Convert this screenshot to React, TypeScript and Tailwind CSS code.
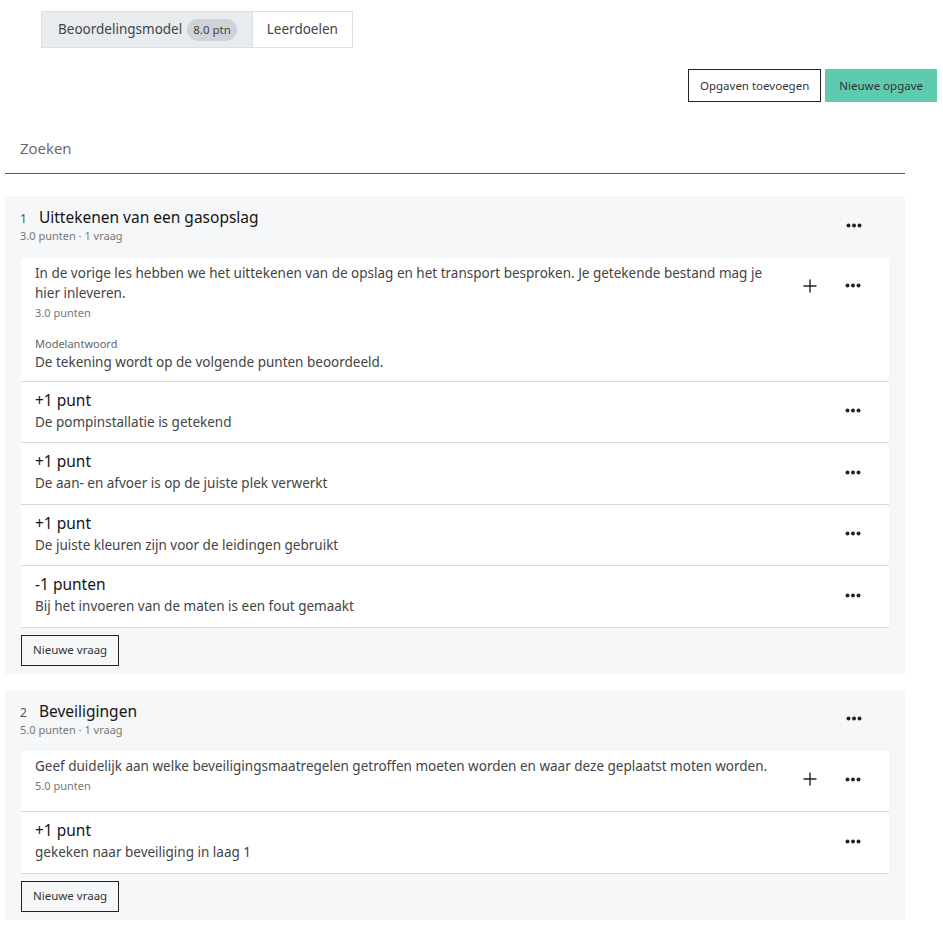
import React from 'react';

interface Criterion {
  label: string;
  text: string;
}

interface Section {
  nr: number;
  title: string;
  meta: string;
  question: string[];
  points: string;
  model?: string;
  criteria: Criterion[];
}

const sections: Section[] = [
  {
    nr: 1,
    title: 'Uittekenen van een gasopslag',
    meta: '3.0 punten · 1 vraag',
    question: [
      'In de vorige les hebben we het uittekenen van de opslag en het transport besproken. Je getekende bestand mag je',
      'hier inleveren.',
    ],
    points: '3.0 punten',
    model: 'De tekening wordt op de volgende punten beoordeeld.',
    criteria: [
      { label: '+1 punt', text: 'De pompinstallatie is getekend' },
      { label: '+1 punt', text: 'De aan- en afvoer is op de juiste plek verwerkt' },
      { label: '+1 punt', text: 'De juiste kleuren zijn voor de leidingen gebruikt' },
      { label: '-1 punten', text: 'Bij het invoeren van de maten is een fout gemaakt' },
    ],
  },
  {
    nr: 2,
    title: 'Beveiligingen',
    meta: '5.0 punten · 1 vraag',
    question: ['Geef duidelijk aan welke beveiligingsmaatregelen getroffen moeten worden en waar deze geplaatst moten worden.'],
    points: '5.0 punten',
    criteria: [{ label: '+1 punt', text: 'gekeken naar beveiliging in laag 1' }],
  },
];

function Dots() {
  return (
    <button className="w-[30px] h-[30px] flex items-center justify-center">
      <svg width="16" height="5" viewBox="0 0 16 5">
        <circle cx="2.5" cy="2.5" r="2" fill="#222" />
        <circle cx="8" cy="2.5" r="2" fill="#222" />
        <circle cx="13.5" cy="2.5" r="2" fill="#222" />
      </svg>
    </button>
  );
}

function PlusIcon() {
  return (
    <button className="w-[30px] h-[30px] flex items-center justify-center">
      <svg width="16" height="16" viewBox="0 0 16 16">
        <path d="M8 1.5v13M1.5 8h13" stroke="#222" strokeWidth="1.4" />
      </svg>
    </button>
  );
}

function SectionCard({ s }: { s: Section }) {
  return (
    <div className="ml-[5px] w-[900px] bg-[#f6f7f9] pb-[8px]">
      {/* header */}
      <div className="h-[61.5px] pl-[15px] pr-[36px] pt-[10px] flex items-start justify-between">
        <div>
          <div className="flex items-baseline gap-[12px] h-[22px] leading-[22px]">
            <span className="text-[12px] text-[#555]">{s.nr}</span>
            <span className="text-[15.5px] text-[#151515]">{s.title}</span>
          </div>
          <div className="text-[11px] leading-[16px] text-[#777]">{s.meta}</div>
        </div>
        <div className="mt-[4px]">
          <Dots />
        </div>
      </div>

      <div className="mx-[16px] bg-white">
        {/* question */}
        <div
          className={`pl-[14px] pr-[21px] pt-[5px] border-b border-[#d8d8dc] ${s.model ? 'pb-[9px]' : 'pb-[15px]'}`}
        >
          <div className="flex items-start justify-between">
            <div>
              {s.question.map((l) => (
                <div key={l} className="text-[13.5px] leading-[20px] text-[#444]">
                  {l}
                </div>
              ))}
              <div className="text-[11px] leading-[20px] text-[#777]">{s.points}</div>
            </div>
            <div className="flex items-center gap-[13px] mt-[8px]">
              <PlusIcon />
              <Dots />
            </div>
          </div>
          {s.model && (
            <div className="mt-[13px]">
              <div className="text-[11px] leading-[16px] text-[#666]">Modelantwoord</div>
              <div className="text-[13.5px] leading-[20px] text-[#444]">{s.model}</div>
            </div>
          )}
        </div>

        {/* criteria */}
        {s.criteria.map((c, i) => (
          <div
            key={i}
            className="pl-[14px] pr-[21px] pt-[7px] h-[61.5px] flex items-start justify-between border-b border-[#d8d8dc]"
          >
            <div>
              <div className="text-[15.5px] leading-[22px] text-[#151515]">{c.label}</div>
              <div className="text-[13.5px] leading-[22px] text-[#444]">{c.text}</div>
            </div>
            <div className="mt-[7px]">
              <Dots />
            </div>
          </div>
        ))}
      </div>

      <div className="mx-[16px] mt-[7px]">
        <button className="h-[31px] px-[11px] border border-[#222] text-[11.5px] text-[#333] bg-transparent">
          Nieuwe vraag
        </button>
      </div>
    </div>
  );
}

export default function App() {
  return (
    <div className="min-h-[939px] bg-white pb-[20px]" style={{ fontFamily: '"Noto Sans", "DejaVu Sans", sans-serif' }}>
      {/* tabs */}
      <div className="pt-[11px] pl-[41px]">
        <div className="inline-flex border border-[#dcdfe3] h-[37px]">
          <div className="bg-[#e9ecef] pl-[16px] pr-[15px] flex items-center gap-[5px] text-[13.5px] text-[#444]">
            <span>Beoordelingsmodel</span>
            <span className="bg-[#cfd3d7] rounded-full px-[6px] h-[22px] flex items-center text-[11.5px] text-[#444]">
              8.0 ptn
            </span>
          </div>
          <div className="bg-white px-[14px] flex items-center text-[13.5px] text-[#444] border-l border-[#dcdfe3]">
            Leerdoelen
          </div>
        </div>
      </div>

      {/* actions */}
      <div className="flex justify-end gap-[4px] pr-[6px] mt-[21px]">
        <button className="h-[33px] px-[11px] border border-[#222] text-[11.5px] text-[#333] bg-white">
          Opgaven toevoegen
        </button>
        <button className="h-[33px] px-[14px] bg-[#5ecbae] text-[11.5px] text-[#333]">Nieuwe opgave</button>
      </div>

      {/* search */}
      <div className="ml-[5px] w-[900px] border-b border-blue-600">
        <div className="h-[71px] flex items-center pl-[15px]">
          <span className="text-[15px] text-[#666] mt-[22px]" style={{ fontFamily: '"Open Sans", sans-serif' }}>
            Zoeken
          </span>
        </div>
      </div>

      <div className="mt-[22px]">
        <SectionCard s={sections[0]} />
      </div>
      <div className="mt-[16px]">
        <SectionCard s={sections[1]} />
      </div>
    </div>
  );
}
